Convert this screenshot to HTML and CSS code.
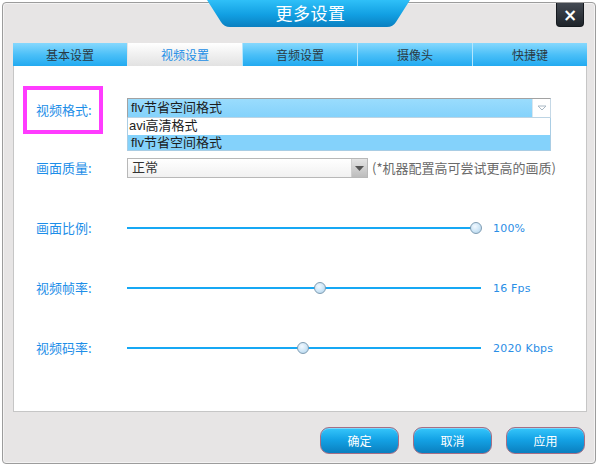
FILE: index.html
```html
<!DOCTYPE html>
<html lang="zh-CN">
<head>
<meta charset="utf-8">
<title>更多设置</title>
<link rel="stylesheet" href="styles.css">
</head>
<body>
<div class="window">
  <div class="titlebar">
    <div class="title-tab">
      <svg class="title-shape" width="203" height="27" viewBox="0 0 203 27" aria-hidden="true">
        <defs>
          <linearGradient id="tg" x1="0" y1="0" x2="0" y2="1">
            <stop offset="0" stop-color="#2fc0f8"/>
            <stop offset="0.55" stop-color="#119fe2"/>
            <stop offset="1" stop-color="#0a7fc0"/>
          </linearGradient>
        </defs>
        <path d="M0 0 H203 L189 22 Q186 27 180 27 H23 Q17 27 14 22 Z" fill="url(#tg)"/>
      </svg>
      <span class="title-text">更多设置</span>
    </div>
    <button class="close" type="button">×</button>
  </div>

  <div class="tabs">
    <div class="tab">基本设置</div>
    <div class="tab active">视频设置</div>
    <div class="tab">音频设置</div>
    <div class="tab">摄像头</div>
    <div class="tab">快捷键</div>
  </div>

  <div class="panel">
    <div class="row row-format">
      <div class="label-box"><span class="label">视频格式:</span></div>
      <div class="combo-wrap">
        <div class="combo combo-open">
          <span class="combo-text">flv节省空间格式</span>
          <span class="combo-arrow">
            <svg width="10" height="6" viewBox="0 0 10 6"><path d="M1 1 H9 L5 5 Z" fill="none" stroke="#a9b8c4" stroke-width="1"/></svg>
          </span>
        </div>
        <ul class="dropdown">
          <li class="item">avi高清格式</li>
          <li class="item selected">flv节省空间格式</li>
        </ul>
      </div>
    </div>

    <div class="row row-quality">
      <span class="label label-col">画面质量:</span>
      <div class="combo combo-gray">
        <span class="combo-text">正常</span>
        <span class="combo-btn">
          <svg width="9" height="5" viewBox="0 0 9 5"><path d="M0 0 H9 L4.5 5 Z" fill="#555"/></svg>
        </span>
      </div>
      <span class="note">(*机器配置高可尝试更高的画质)</span>
    </div>

    <div class="row row-slider">
      <span class="label label-col">画面比例:</span>
      <div class="slider"><div class="track"></div><span class="thumb" style="left:343px"></span></div>
      <span class="value">100%</span>
    </div>

    <div class="row row-slider">
      <span class="label label-col">视频帧率:</span>
      <div class="slider"><div class="track"></div><span class="thumb" style="left:187px"></span></div>
      <span class="value">16 Fps</span>
    </div>

    <div class="row row-slider">
      <span class="label label-col">视频码率:</span>
      <div class="slider"><div class="track"></div><span class="thumb" style="left:170px"></span></div>
      <span class="value">2020 Kbps</span>
    </div>
  </div>

  <div class="buttons">
    <button class="btn" type="button">确定</button>
    <button class="btn" type="button">取消</button>
    <button class="btn" type="button">应用</button>
  </div>
</div>
</body>
</html>
```
FILE: styles.css
```css
html, body {
  margin: 0;
  padding: 0;
  width: 600px;
  height: 467px;
  background: #ffffff;
  overflow: hidden;
}

body {
  font-family: "Liberation Sans", "Noto Sans CJK SC", sans-serif;
}

.window {
  margin: 2px 0 0 2px;
  width: 594px;
  height: 462px;
  box-sizing: border-box;
  border: 1px solid #9c9c9c;
  border-radius: 4px;
  background: #e7e5e5;
  box-shadow: inset 0 0 0 1px #f4f3f3;
}

.titlebar {
  display: flex;
  align-items: flex-start;
  height: 40px;
  padding-left: 204px;
}

.title-tab {
  position: relative;
  width: 203px;
  height: 27px;
  margin-top: -3px;
  text-align: center;
}

.title-shape {
  position: absolute;
  left: 0;
  top: 0;
}

.title-text {
  position: relative;
  display: block;
  padding-left: 4px;
  font-family: "Noto Sans CJK SC", sans-serif;
  font-size: 17px;
  line-height: 26px;
  color: #ffffff;
  letter-spacing: 0.5px;
}

.close {
  margin-left: auto;
  margin-right: 11px;
  width: 28px;
  height: 24px;
  border: 1px solid #15191e;
  border-top: none;
  border-radius: 0 0 4px 4px;
  background: linear-gradient(#444a53, #1f242a);
  color: #ffffff;
  font-family: "DejaVu Sans", sans-serif;
  font-weight: bold;
  font-size: 17px;
  line-height: 22px;
  padding: 0;
}

.tabs {
  display: flex;
  margin-left: 10px;
  width: 574px;
  height: 23px;
}

.tab {
  flex: 1;
  text-align: center;
  font-family: "Noto Sans CJK SC", sans-serif;
  font-size: 12px;
  line-height: 23px;
  color: #2a3a44;
  background: linear-gradient(#86d8fd, #4cc0f8 50%, #22aaf0);
  border-left: 1px solid #b4e6fd;
}

.tab:first-child {
  border-left: none;
}

.tab.active {
  background: linear-gradient(#ffffff, #f0f0f0 50%, #e2e2e2);
  color: #1a8ee6;
  border-left-color: #e6e6e6;
}

.panel {
  margin-left: 10px;
  width: 574px;
  height: 346px;
  box-sizing: border-box;
  border: 1px solid #c6c6c6;
  border-top: none;
  background: #ffffff;
  padding: 20px 0 0 9px;
}

.row {
  display: flex;
  align-items: center;
}

.label {
  font-family: "Noto Sans CJK SC", sans-serif;
  font-size: 13px;
  line-height: 20px;
  color: #1d8ee8;
}

.label-col {
  width: 104px;
  padding-left: 13px;
  box-sizing: border-box;
  flex: none;
}

.row-format {
  height: 48px;
  align-items: flex-start;
}

.label-box {
  width: 80px;
  height: 48px;
  box-sizing: border-box;
  border: 4px solid #ff3cff;
  padding-left: 9px;
  display: flex;
  align-items: center;
  flex: none;
}

.combo-wrap {
  position: relative;
  margin-left: 24px;
  margin-top: 12px;
  width: 424px;
}

.combo {
  display: flex;
  height: 20px;
  box-sizing: border-box;
  font-size: 13px;
  line-height: 18px;
  color: #1c1c1c;
}

.combo-open {
  border: 1px solid #a2a2a2;
  border-right-color: #c5d8e6;
  border-bottom-color: #bcd4e4;
  background: #ffffff;
}

.combo-open .combo-text {
  flex: 1;
  background: linear-gradient(#9adcfd, #84d2fb);
  padding-left: 3px;
}

.combo-arrow {
  width: 17px;
  display: flex;
  align-items: center;
  justify-content: center;
  border-left: 1px solid #d9e6ef;
  background: #ffffff;
}

.dropdown {
  position: absolute;
  left: 0;
  top: 20px;
  width: 424px;
  box-sizing: border-box;
  margin: 0;
  padding: 0;
  list-style: none;
  border: 1px solid #a9cde4;
  border-top: none;
  background: #ffffff;
}

.item {
  height: 16px;
  font-size: 13px;
  line-height: 16px;
  color: #1c1c1c;
  padding-left: 1px;
}

.item.selected {
  background: #84d2fb;
  margin-top: 1px;
  height: 15px;
  line-height: 15px;
  padding-left: 3px;
}

.row-quality {
  margin-top: 24px;
  height: 20px;
}

.combo-gray {
  width: 241px;
  border: 1px solid #b8b8b8;
  background: linear-gradient(#ffffff, #f1f1f1);
  flex: none;
}

.combo-gray .combo-text {
  flex: 1;
  padding-left: 4px;
  color: #333333;
}

.combo-btn {
  width: 15px;
  display: flex;
  align-items: center;
  justify-content: center;
  background: linear-gradient(#e4e4e4, #bdbdbd);
  border-left: 1px solid #cfcfcf;
}

.note {
  margin-left: 4px;
  font-family: "Noto Sans CJK SC", sans-serif;
  font-size: 13px;
  line-height: 20px;
  color: #6a6a6a;
}

.row-slider {
  margin-top: 40px;
  height: 20px;
}

.slider {
  position: relative;
  width: 354px;
  height: 20px;
  flex: none;
  display: flex;
  align-items: center;
}

.track {
  width: 100%;
  height: 2px;
  background: #16a8f4;
}

.thumb {
  position: absolute;
  top: 4px;
  width: 12px;
  height: 12px;
  box-sizing: border-box;
  border-radius: 50%;
  border: 1px solid #7f9db3;
  background: radial-gradient(circle at 40% 35%, #f2f9ff, #cde5f6 55%, #a9cbe3);
}

.value {
  margin-left: 12px;
  font-family: "DejaVu Sans", sans-serif;
  font-size: 11px;
  letter-spacing: 0.2px;
  color: #2a8ee6;
}

.buttons {
  display: flex;
  justify-content: flex-end;
  gap: 14px;
  padding: 15px 10px 0 0;
}

.btn {
  width: 79px;
  height: 27px;
  padding: 0;
  border: 1px solid #a56f86;
  border-radius: 9px;
  background: linear-gradient(#36c6fb, #14a3e6 45%, #0a7fbf);
  box-shadow: inset 0 1px 0 rgba(255,255,255,0.35);
  color: #ffffff;
  font-family: "Noto Sans CJK SC", sans-serif;
  font-size: 12px;
  line-height: 25px;
}
```
